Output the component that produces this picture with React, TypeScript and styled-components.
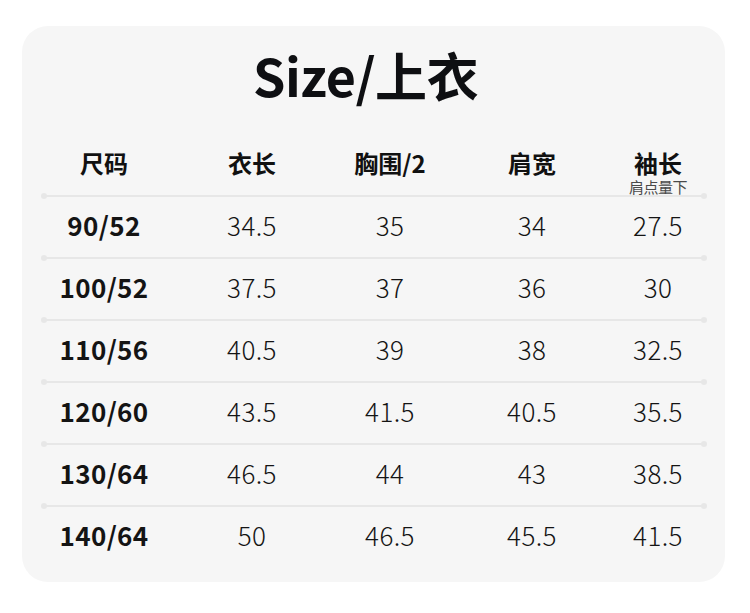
import * as React from 'react';
import styled, { createGlobalStyle } from 'styled-components';

const GlobalStyle = createGlobalStyle`
    html, body {
        margin: 0;
        padding: 0;
        background: #ffffff;
    }
    body {
        font-family: "Noto Sans CJK SC", "Noto Sans", sans-serif;
        color: #111111;
    }
`;

const Page = styled.div`
    width: 750px;
    height: 613px;
    padding: 26px 25px 0 22px;
    box-sizing: border-box;
`;

const Card = styled.div`
    width: 703px;
    height: 556px;
    box-sizing: border-box;
    background: #f6f6f6;
    border-radius: 26px;
    padding-top: 23px;
`;

const Title = styled.h1`
    margin: 0 0 47px 0;
    padding-right: 16px;
    height: 52px;
    line-height: 52px;
    font-size: 52px;
    font-weight: 700;
    text-align: center;
    color: #0e0f12;
    letter-spacing: -0.5px;
`;

const Grid = styled.div`
    display: grid;
    grid-template-columns: 164px 132px 144px 140px 112px;
`;

const HeaderRow = styled(Grid)`
    align-items: start;
    height: 47px;
`;

const HeadCell = styled.div`
    display: flex;
    flex-direction: column;
    align-items: center;
`;

const HeadLabel = styled.span`
    font-size: 24px;
    font-weight: 700;
    line-height: 28px;
    margin-top: 1px;
    color: #111111;
`;

const SubLabel = styled.span`
    font-size: 15px;
    line-height: 16px;
    margin-top: 2px;
    color: #4a4a4a;
    letter-spacing: -0.5px;
`;

const Divider = styled.div`
    position: relative;
    height: 2px;
    margin: 0 21px 0 22px;
    background: #e7e7e7;
    border-radius: 1px;
    &::before, &::after {
        content: '';
        position: absolute;
        top: -2px;
        width: 6px;
        height: 6px;
        border-radius: 50%;
        background: #e7e7e7;
    }
    &::before { left: -3px; }
    &::after { right: -3px; }
`;

const Row = styled(Grid)`
    height: 60px;
    align-items: start;
`;

const Cell = styled.div<{ $bold?: boolean }>`
    text-align: center;
    font-size: 26px;
    line-height: 56px;
    letter-spacing: 0.4px;
    font-weight: ${(p) => (p.$bold ? 700 : 300)};
    color: #141414;
`;

type Column = { label: string; sub?: string };

const columns: Column[] = [
    { label: '尺码' },
    { label: '衣长' },
    { label: '胸围/2' },
    { label: '肩宽' },
    { label: '袖长', sub: '肩点量下' },
];

const rows: string[][] = [
    ['90/52', '34.5', '35', '34', '27.5'],
    ['100/52', '37.5', '37', '36', '30'],
    ['110/56', '40.5', '39', '38', '32.5'],
    ['120/60', '43.5', '41.5', '40.5', '35.5'],
    ['130/64', '46.5', '44', '43', '38.5'],
    ['140/64', '50', '46.5', '45.5', '41.5'],
];

export default function App() {
    return (
        <Page>
            <GlobalStyle />
            <Card>
                <Title>Size/上衣</Title>
                <HeaderRow>
                    {columns.map((c) => (
                        <HeadCell key={c.label}>
                            <HeadLabel>{c.label}</HeadLabel>
                            {c.sub && <SubLabel>{c.sub}</SubLabel>}
                        </HeadCell>
                    ))}
                </HeaderRow>
                {rows.map((r) => (
                    <React.Fragment key={r[0]}>
                        <Divider />
                        <Row>
                            {r.map((v, i) => (
                                <Cell key={i} $bold={i === 0}>{v}</Cell>
                            ))}
                        </Row>
                    </React.Fragment>
                ))}
            </Card>
        </Page>
    );
}
